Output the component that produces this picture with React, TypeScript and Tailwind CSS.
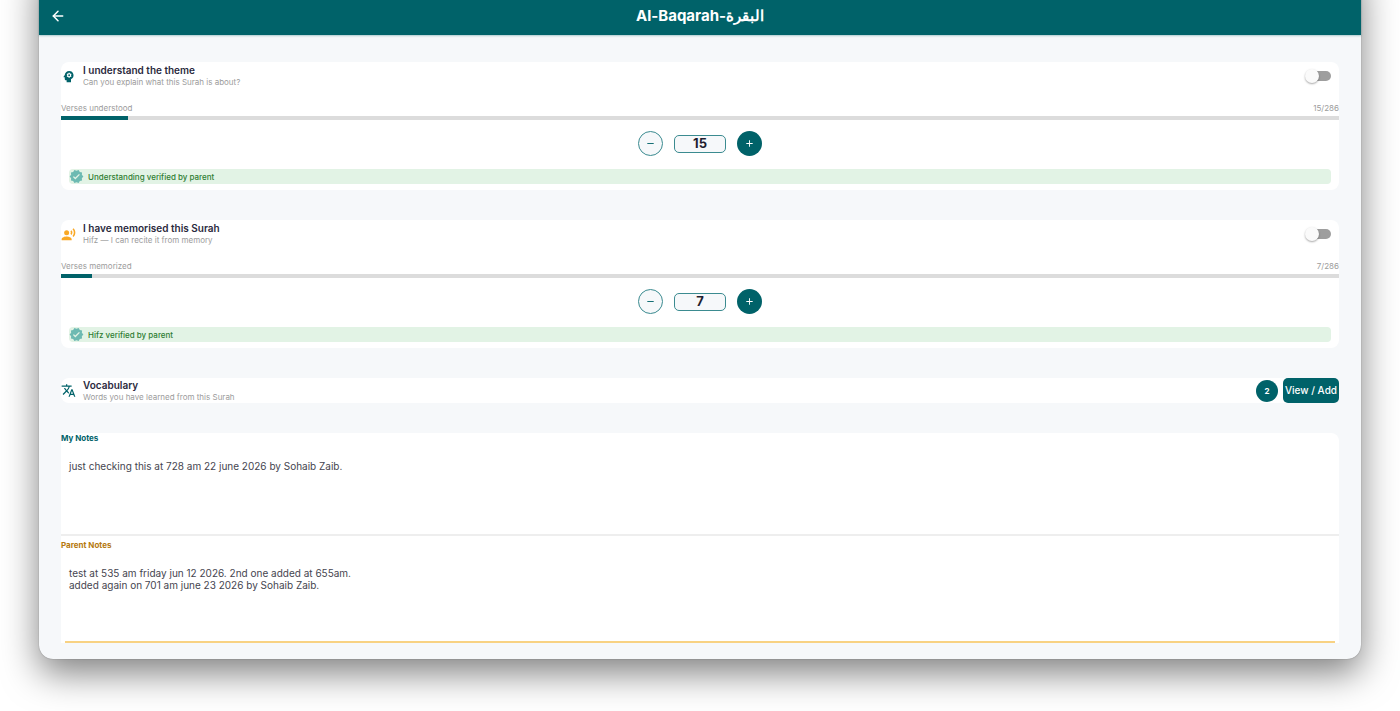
import { useState } from "react";
import { MdAdd, MdPsychology, MdRecordVoiceOver, MdRemove, MdTranslate, MdVerified } from "react-icons/md";
import { ArrowLeft } from "lucide-react";

const TOTAL_VERSES = 286;

type HeadingProps = {
  icon: React.ReactNode;
  title: string;
  subtitle: string;
};

type ProgressCardProps = HeadingProps & {
  label: string;
  initial: number;
  verified: string;
};

function Heading({ icon, title, subtitle }: HeadingProps) {
  return (
    <div className="flex items-center gap-[7px]">
      {icon}
      <div>
        <h2 className="text-[10px] leading-3 font-semibold text-[#2b2a3d]">{title}</h2>
        <p className="text-[8px] leading-3 text-[#9c9c9c]">{subtitle}</p>
      </div>
    </div>
  );
}

function Toggle({ label }: { label: string }) {
  return (
    <label className="relative mr-2 flex h-4 w-[26px] items-center">
      <input type="checkbox" role="switch" aria-label={label} className="peer absolute inset-0 z-10 cursor-pointer opacity-0" />
      <span className="ml-auto h-[10px] w-5 rounded-full bg-[#9e9e9e] peer-checked:bg-[#80b2b5]"></span>
      <span className="absolute left-0 h-[14px] w-[14px] rounded-full bg-[#fafafa] shadow-[0_1px_2px_rgba(0,0,0,0.35)] peer-checked:left-3 peer-checked:bg-[#006269]"></span>
    </label>
  );
}

function ProgressCard({ icon, title, subtitle, label, initial, verified }: ProgressCardProps) {
  const [count, setCount] = useState(initial);

  return (
    <section className="rounded-lg bg-white pt-[2px] pb-[6px]">
      <div className="flex items-center justify-between">
        <Heading icon={icon} title={title} subtitle={subtitle} />
        <Toggle label={title} />
      </div>
      <div className="mt-[14px] flex justify-between text-[8px] leading-3 text-[#9c9c9c]">
        <span>{label}</span>
        <span>{count}/{TOTAL_VERSES}</span>
      </div>
      <div className="mt-[2px] h-1 bg-[#dcdcdc]">
        <div className="h-full bg-[#006269]" style={{ width: `${(count / TOTAL_VERSES) * 100}%` }}></div>
      </div>
      <div className="mt-[11px] flex items-center justify-center gap-[11px]">
        <button
          aria-label="Decrease"
          onClick={() => setCount(Math.max(0, count - 1))}
          className="flex h-[25px] w-[25px] items-center justify-center rounded-full border border-[#3b8b90] bg-[#f6f8fa] text-[11px] text-[#006269]"
        >
          <MdRemove />
        </button>
        <input
          aria-label={label}
          value={count}
          onChange={(e) => setCount(Math.min(TOTAL_VERSES, Number(e.target.value) || 0))}
          className="h-[18px] w-[52px] rounded-[5px] border border-[#3b8b90] bg-[#f6f8fa] text-center text-[13px] font-bold text-[#1f1e30] outline-none"
        />
        <button
          aria-label="Increase"
          onClick={() => setCount(Math.min(TOTAL_VERSES, count + 1))}
          className="flex h-[25px] w-[25px] items-center justify-center rounded-full bg-[#006269] text-[11px] text-white"
        >
          <MdAdd />
        </button>
      </div>
      <div className="mx-2 mt-[13px] flex h-[15px] items-center gap-1 rounded bg-[#e2f3e5] text-[8px] font-medium text-[#2e7d32]">
        <MdVerified className="h-[15px] w-[15px] text-[#6dbab2]" />
        {verified}
      </div>
    </section>
  );
}

export default function App() {
  return (
    <div className="overflow-hidden bg-white px-[39px] pb-[52px] font-['Inter','Noto_Sans',sans-serif]">
      <div className="-mt-10 rounded-[14px] bg-[#f6f8fa] shadow-[0_0_1px_rgba(0,0,0,0.5),0_14px_36px_rgba(0,0,0,0.5)]">
        <header className="grid grid-cols-[1fr_auto_1fr] items-center rounded-t-[14px] bg-[#006269] px-[11px] pt-11 pb-[7px] text-white shadow-[0_1px_2px_rgba(0,98,105,0.3)]">
          <a href="#" aria-label="Back" className="w-4">
            <ArrowLeft size={16} strokeWidth={2.25} />
          </a>
          <h1 className="text-[15px] leading-6 font-bold">Al-Baqarah-البقرة</h1>
        </header>

        <main className="px-[22px] pt-[27px] pb-4">
          <div className="flex flex-col gap-[30px]">
            <ProgressCard
              icon={<MdPsychology className="h-[15px] w-[15px] text-[#006269]" />}
              title="I understand the theme"
              subtitle="Can you explain what this Surah is about?"
              label="Verses understood"
              initial={15}
              verified="Understanding verified by parent"
            />
            <ProgressCard
              icon={<MdRecordVoiceOver className="h-[15px] w-[15px] text-[#f9a825]" />}
              title="I have memorised this Surah"
              subtitle="Hifz — I can recite it from memory"
              label="Verses memorized"
              initial={7}
              verified="Hifz verified by parent"
            />

            <section className="flex items-center justify-between rounded-lg bg-white">
              <Heading
                icon={<MdTranslate className="h-[15px] w-[15px] text-[#006269]" />}
                title="Vocabulary"
                subtitle="Words you have learned from this Surah"
              />
              <div className="flex items-center gap-[5px]">
                <span className="flex h-[22px] w-[22px] items-center justify-center rounded-full bg-[#006269] text-[8px] font-bold text-white">2</span>
                <button className="h-[25px] rounded-[5px] bg-[#006269] px-[2px] text-[10px] font-medium text-white">View / Add</button>
              </div>
            </section>

            <section className="rounded-t-lg bg-white">
              <div className="border-b-2 border-[#eeeeee]">
                <label htmlFor="my-notes" className="block text-[8px] leading-[11px] font-bold text-[#006269]">My Notes</label>
                <textarea
                  id="my-notes"
                  defaultValue="just checking this at 728 am 22 june 2026 by Sohaib Zaib."
                  className="block h-[90px] w-full resize-none px-2 pt-4 text-[10px] leading-3 text-[#45454f] outline-none"
                />
              </div>
              <div className="pt-1">
                <label htmlFor="parent-notes" className="block text-[8px] leading-[11px] font-bold text-[#b5790f]">Parent Notes</label>
                <textarea
                  id="parent-notes"
                  defaultValue={"test at 535 am friday jun 12 2026. 2nd one added at 655am.\nadded again on 701 am june 23 2026 by Sohaib Zaib."}
                  className="block h-[90px] w-full resize-none px-2 pt-4 text-[10px] leading-3 text-[#45454f] outline-none"
                />
                <div className="mx-1 h-[2px] bg-[#f8d283]"></div>
              </div>
            </section>
          </div>
        </main>
      </div>
    </div>
  );
}
